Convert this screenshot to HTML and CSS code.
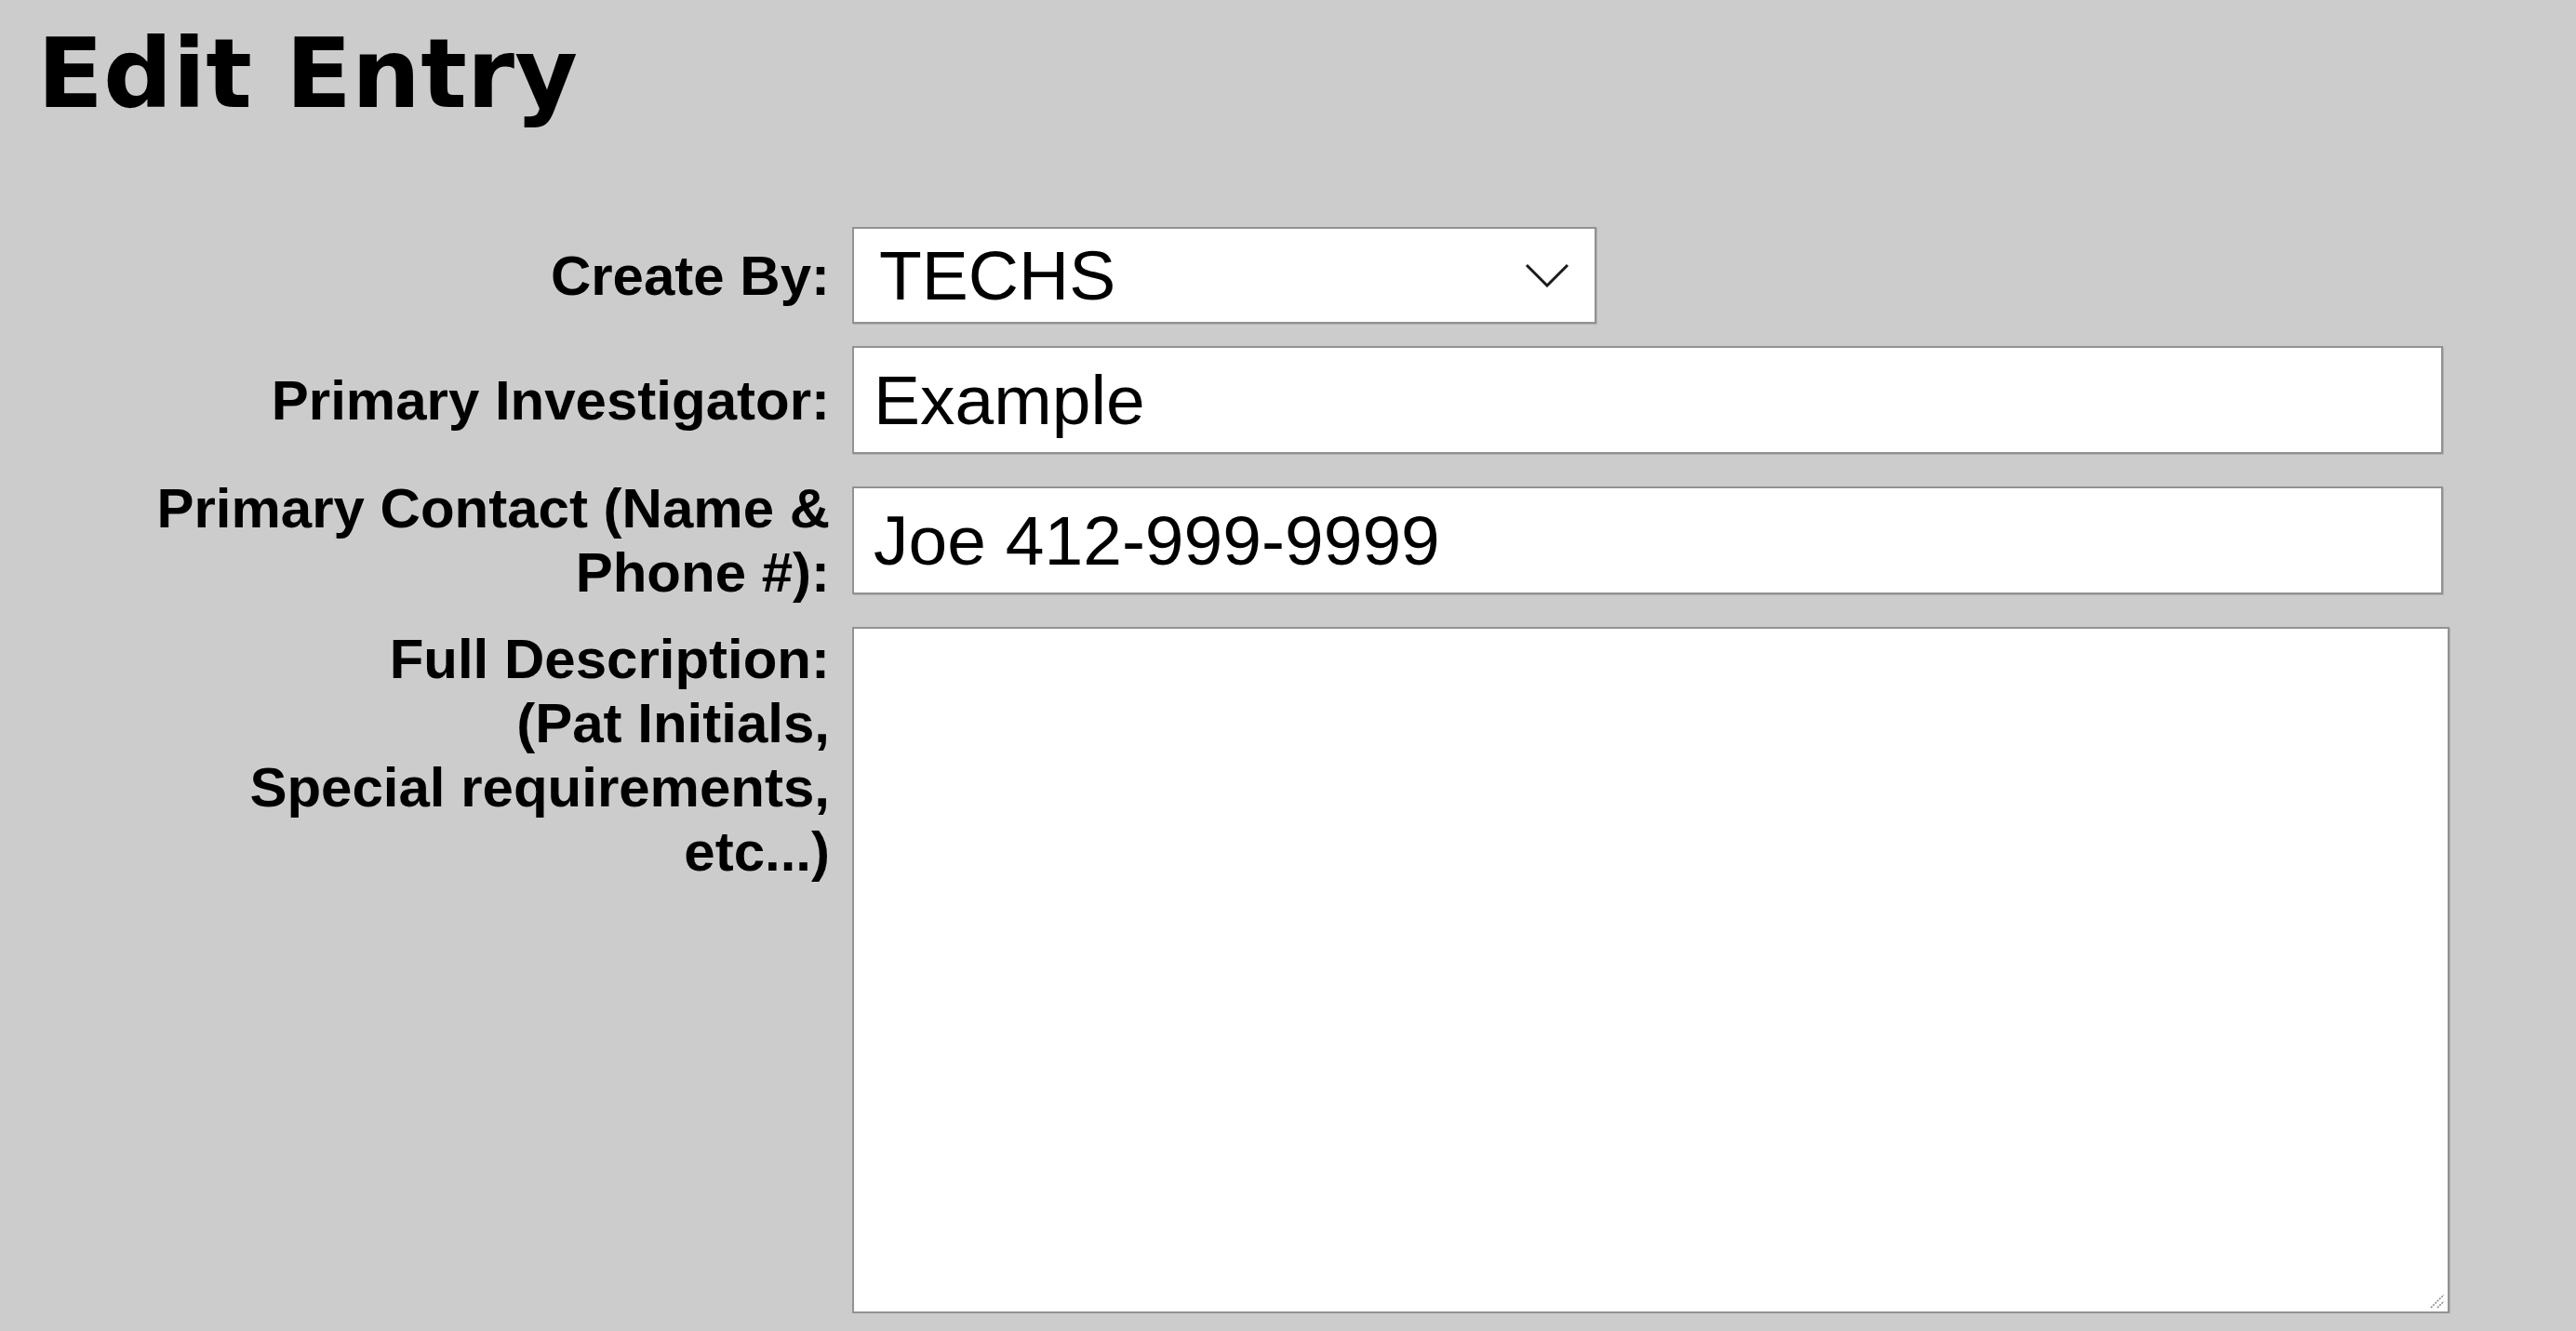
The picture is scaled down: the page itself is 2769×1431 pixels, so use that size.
FILE: index.html
```html
<!DOCTYPE html>
<html lang="en">
<head>
    <meta charset="UTF-8">
    <title>Edit Entry</title>
    <link rel="stylesheet" href="styles.css">
</head>
<body>

<h1 class="page-title">Edit Entry</h1>

<form class="entry-form">
    <label class="field-label" for="createBy">Create By:</label>
    <div class="select-wrap">
        <select id="createBy" class="field-select">
            <option>TECHS</option>
        </select>
        <svg class="select-arrow" width="48" height="26" viewBox="0 0 48 26">
            <polyline points="2,2 24,24 46,2" fill="none" stroke="#1a1a1a" stroke-width="3"/>
        </svg>
    </div>

    <label class="field-label" for="investigator">Primary Investigator:</label>
    <input type="text" id="investigator" class="field-input" value="Example">

    <label class="field-label" for="contact">Primary Contact (Name &amp; Phone #):</label>
    <input type="text" id="contact" class="field-input" value="Joe 412-999-9999">

    <label class="field-label label-top" for="description">Full Description:<br>(Pat Initials,<br>Special requirements,<br>etc...)</label>
    <div class="text-wrap">
        <textarea id="description" class="field-text"></textarea>
        <!-- resize grip -->
        <svg class="text-grip" width="18" height="18" viewBox="0 0 18 18">
            <line x1="2" y1="16" x2="16" y2="2" stroke="#8a8a8a" stroke-width="1.6" stroke-dasharray="2 1.2"/>
            <line x1="9" y1="16" x2="16" y2="9" stroke="#8a8a8a" stroke-width="1.6" stroke-dasharray="2 1.2"/>
        </svg>
    </div>
</form>

</body>
</html>
```

FILE: styles.css
```css
body {
    margin: 0;
    padding: 0 30px;
    background: #cccccc;
    color: #000;
    font-family: "Liberation Sans", Arial, sans-serif;
}

.page-title {
    font-family: "DejaVu Sans", Verdana, sans-serif;
    font-weight: bold;
    font-size: 104px;
    line-height: 122px;
    margin: 18px 0 104px 10px;
}

.entry-form {
    display: grid;
    grid-template-columns: 862px 1717px;
    column-gap: 24px;
    row-gap: 24px;
    align-items: center;
}

.field-label {
    font-weight: bold;
    font-size: 60px;
    line-height: 69px;
    text-align: right;
}

.label-top {
    align-self: start;
}

.select-wrap {
    position: relative;
    width: 800px;
    height: 104px;
}

.field-select,
.field-input,
.field-text {
    font-family: "Liberation Sans", Arial, sans-serif;
    font-size: 75px;
    color: #000;
    background: #fff;
    border: 2px solid #929292;
    box-shadow: 1px 1px 0 #b0b0b0;
    border-radius: 0;
    box-sizing: border-box;
    margin: 0;
    outline: none;
}

.field-select {
    appearance: none;
    -webkit-appearance: none;
    width: 800px;
    height: 104px;
    padding: 0 0 0 27px;
}

.select-arrow {
    position: absolute;
    left: 723px;
    top: 39px;
}

.field-input {
    width: 1710px;
    height: 116px;
    padding: 0 0 0 21px;
}

.text-wrap {
    position: relative;
    width: 1717px;
    height: 738px;
}

.field-text {
    display: block;
    width: 1717px;
    height: 738px;
    padding: 8px 21px;
    resize: none;
}

.text-grip {
    position: absolute;
    right: 4px;
    bottom: 4px;
}
```
